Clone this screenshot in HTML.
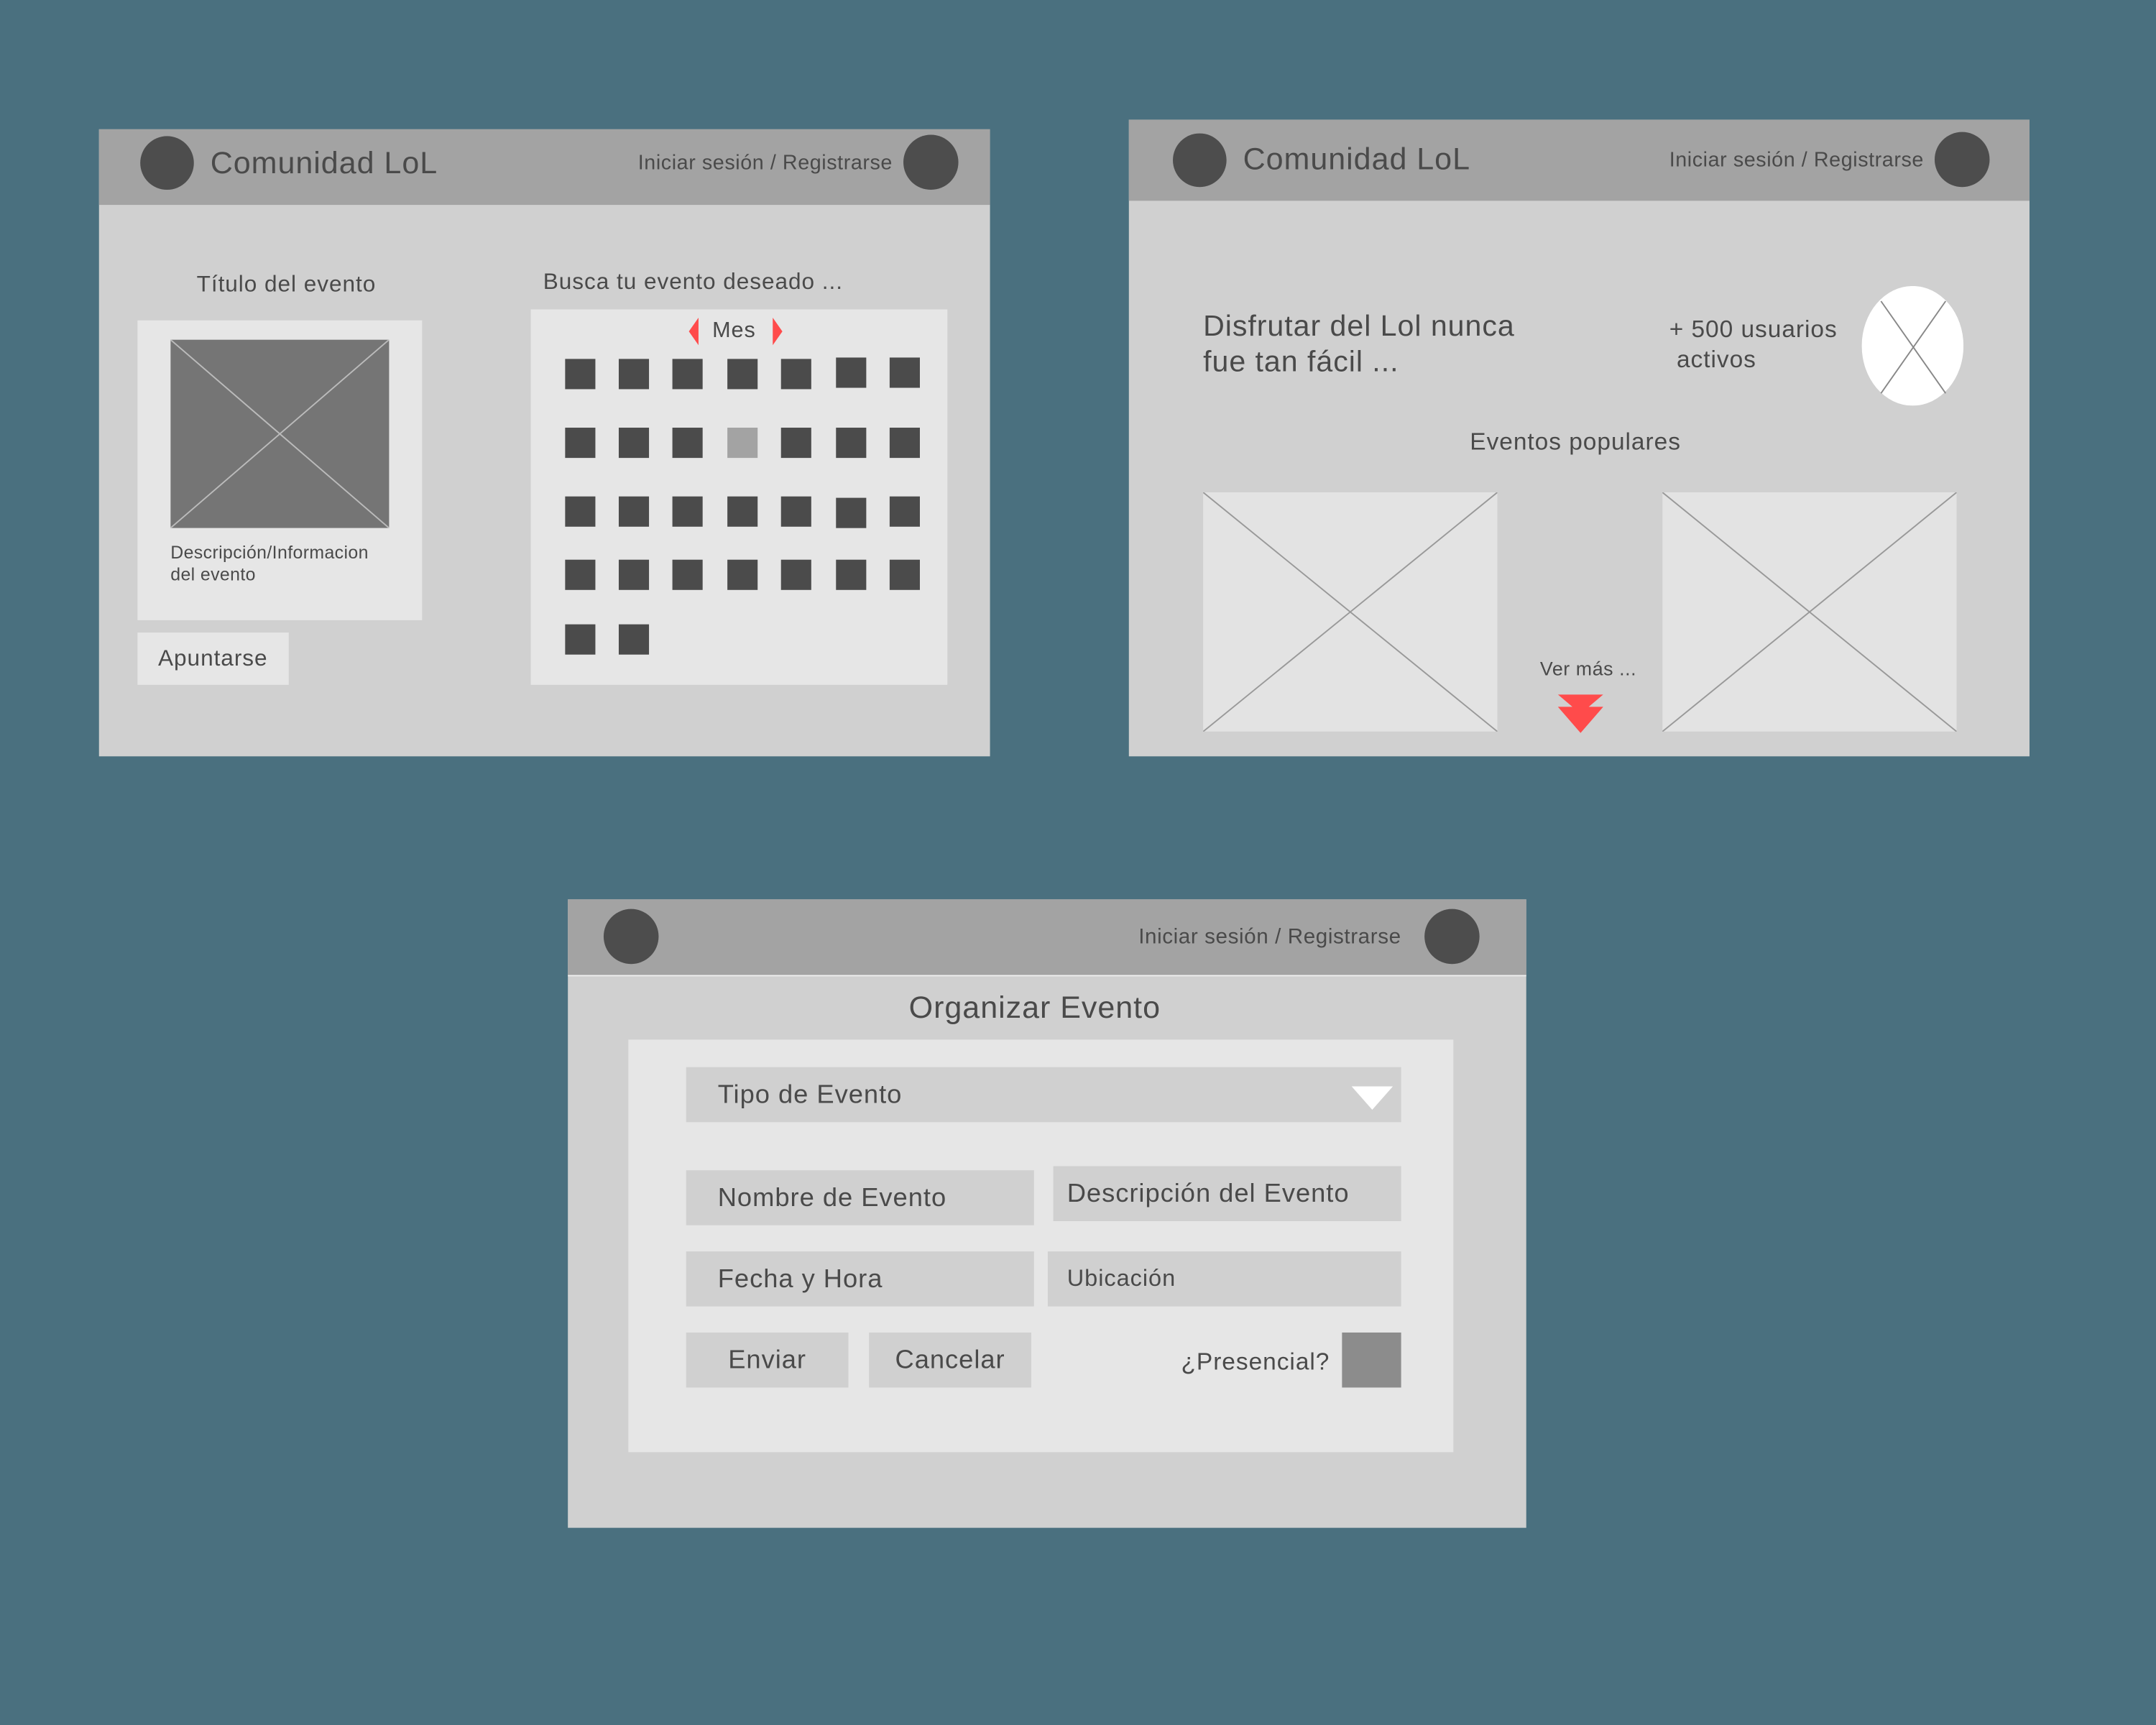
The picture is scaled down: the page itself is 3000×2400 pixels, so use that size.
<!DOCTYPE html>
<html><head><meta charset="utf-8"><style>
*{margin:0;padding:0;box-sizing:border-box}
body{width:3000px;height:2400px;background:#4a707f;overflow:hidden;font-family:"Liberation Sans",sans-serif;color:#4a4a4a;letter-spacing:0.5px}
#w{position:absolute;left:0;top:0;width:1568px;height:1254px;transform:scale(1.91327);transform-origin:0 0}
.a{position:absolute}
.hd{background:#a3a3a3}
.bd{background:#d0d0d0}
.lt{background:#e6e6e6}
.c{position:absolute;border-radius:50%;background:#4d4d4d}
.t{position:absolute;white-space:nowrap}
.sq{position:absolute;width:22px;height:22px;background:#4b4b4b}
.f{position:absolute;background:#d0d0d0;font-size:19px;line-height:42px;padding-left:23px}
</style></head><body><div id="w">

<!-- Panel 1 -->
<div class="a bd" style="left:72px;top:94px;width:648px;height:456px"></div>
<div class="a hd" style="left:72px;top:94px;width:648px;height:55px"></div>
<div class="c" style="left:102px;top:99px;width:39px;height:39px"></div>
<div class="t" style="left:153px;top:106px;font-size:22.5px">Comunidad LoL</div>
<div class="t" style="left:464px;top:110px;font-size:15px;letter-spacing:0.3px">Iniciar sesión / Registrarse</div>
<div class="c" style="left:657px;top:98px;width:40px;height:40px"></div>
<div class="t" style="left:143px;top:198px;font-size:16.5px">Título del evento</div>
<div class="a lt" style="left:100px;top:233px;width:207px;height:218px"></div>
<svg class="a" style="left:124px;top:247px" width="159" height="137"><rect width="159" height="137" fill="#757575"/><path d="M0 0L159 137M159 0L0 137" stroke="#bbb" stroke-width="1"/></svg>
<div class="t" style="left:124px;top:394px;font-size:13px;line-height:16px;letter-spacing:0.2px">Descripción/Informacion<br>del evento</div>
<div class="a lt" style="left:100px;top:460px;width:110px;height:38px"></div>
<div class="t" style="left:115px;top:470px;font-size:16.5px">Apuntarse</div>
<div class="t" style="left:395px;top:196px;font-size:16.5px">Busca tu evento deseado ...</div>
<div class="a lt" style="left:386px;top:225px;width:303px;height:273px"></div>
<svg class="a" style="left:499px;top:231px" width="72" height="20"><path d="M9 0L2 10L9 20Z M63 0L70 10L63 20Z" fill="#ff4b4b"/></svg>
<div class="t" style="left:518px;top:232px;font-size:16px">Mes</div>

<!-- Panel 2 -->
<div class="a bd" style="left:821px;top:87px;width:655px;height:463px"></div>
<div class="a hd" style="left:821px;top:87px;width:655px;height:59px"></div>
<div class="c" style="left:853px;top:97px;width:39px;height:39px"></div>
<div class="t" style="left:904px;top:103px;font-size:22.5px">Comunidad LoL</div>
<div class="t" style="left:1214px;top:108px;font-size:15px;letter-spacing:0.3px">Iniciar sesión / Registrarse</div>
<div class="c" style="left:1407px;top:96px;width:40px;height:40px"></div>
<div class="t" style="left:875px;top:224px;font-size:21.5px;line-height:26px">Disfrutar del Lol nunca<br>fue tan fácil ...</div>
<div class="t" style="left:1214px;top:228px;font-size:17.5px;line-height:22px">+ 500 usuarios<br>&nbsp;activos</div>
<svg class="a" style="left:1354px;top:208px" width="74" height="87"><ellipse cx="37" cy="43.5" rx="37" ry="43.5" fill="#fff"/><path d="M14 11L61 78M61 11L14 78" stroke="#888" stroke-width="1"/></svg>
<div class="t" style="left:1069px;top:311px;font-size:17.5px">Eventos populares</div>
<svg class="a" style="left:875px;top:358px" width="214" height="174"><rect width="214" height="174" fill="#e3e3e3"/><path d="M0 0L214 174M214 0L0 174" stroke="#999" stroke-width="1"/></svg>
<svg class="a" style="left:1209px;top:358px" width="214" height="174"><rect width="214" height="174" fill="#e3e3e3"/><path d="M0 0L214 174M214 0L0 174" stroke="#999" stroke-width="1"/></svg>
<div class="t" style="left:1120px;top:478px;font-size:14px;letter-spacing:0.3px">Ver más ...</div>
<svg class="a" style="left:1133px;top:505px" width="33" height="28"><path d="M0 0H33L16.5 14Z M0 9H33L16.5 28Z" fill="#ff4b4b"/></svg>

<!-- Panel 3 -->
<div class="a bd" style="left:413px;top:654px;width:697px;height:457px"></div>
<div class="a hd" style="left:413px;top:654px;width:697px;height:56px;border-bottom:1px solid #f0f0f0"></div>
<div class="c" style="left:439px;top:661px;width:40px;height:40px"></div>
<div class="t" style="left:828px;top:673px;font-size:15.5px;letter-spacing:0.3px">Iniciar sesión / Registrarse</div>
<div class="c" style="left:1036px;top:661px;width:40px;height:40px"></div>
<div class="t" style="left:661px;top:720px;font-size:22.5px">Organizar Evento</div>
<div class="a lt" style="left:457px;top:756px;width:600px;height:300px"></div>
<div class="f" style="left:499px;top:776px;width:520px;height:40px">Tipo de Evento</div>
<svg class="a" style="left:983px;top:790px" width="30" height="18"><path d="M0 0H30L15 17Z" fill="#fff"/></svg>
<div class="f" style="left:499px;top:851px;width:253px;height:40px">Nombre de Evento</div>
<div class="f" style="left:766px;top:848px;width:253px;height:40px;padding-left:10px">Descripción del Evento</div>
<div class="f" style="left:499px;top:910px;width:253px;height:40px">Fecha y Hora</div>
<div class="f" style="left:762px;top:910px;width:257px;height:40px;padding-left:14px;font-size:17px;line-height:39px">Ubicación</div>
<div class="f" style="left:499px;top:969px;width:118px;height:40px;padding:0;text-align:center">Enviar</div>
<div class="f" style="left:632px;top:969px;width:118px;height:40px;padding:0;text-align:center">Cancelar</div>
<div class="t" style="left:859px;top:980px;font-size:17.5px">¿Presencial?</div>
<div class="a" style="left:976px;top:969px;width:43px;height:40px;background:#8c8c8c"></div>

<div style="position:absolute;left:0;top:0">
<div class="sq" style="left:411px;top:261px"></div><div class="sq" style="left:450px;top:261px"></div><div class="sq" style="left:489px;top:261px"></div><div class="sq" style="left:529px;top:261px"></div><div class="sq" style="left:568px;top:261px"></div><div class="sq" style="left:608px;top:260px"></div><div class="sq" style="left:647px;top:260px"></div>
<div class="sq" style="left:411px;top:311px"></div><div class="sq" style="left:450px;top:311px"></div><div class="sq" style="left:489px;top:311px"></div><div class="sq" style="left:529px;top:311px;background:#a3a3a3"></div><div class="sq" style="left:568px;top:311px"></div><div class="sq" style="left:608px;top:311px"></div><div class="sq" style="left:647px;top:311px"></div>
<div class="sq" style="left:411px;top:361px"></div><div class="sq" style="left:450px;top:361px"></div><div class="sq" style="left:489px;top:361px"></div><div class="sq" style="left:529px;top:361px"></div><div class="sq" style="left:568px;top:361px"></div><div class="sq" style="left:608px;top:362px"></div><div class="sq" style="left:647px;top:361px"></div>
<div class="sq" style="left:411px;top:407px"></div><div class="sq" style="left:450px;top:407px"></div><div class="sq" style="left:489px;top:407px"></div><div class="sq" style="left:529px;top:407px"></div><div class="sq" style="left:568px;top:407px"></div><div class="sq" style="left:608px;top:407px"></div><div class="sq" style="left:647px;top:407px"></div>
<div class="sq" style="left:411px;top:454px"></div><div class="sq" style="left:450px;top:454px"></div>
</div>
</div></body></html>
